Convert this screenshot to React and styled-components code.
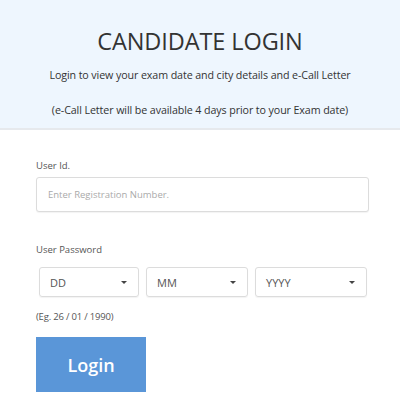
import React from "react";
import styled, { createGlobalStyle } from "styled-components";

const Global = createGlobalStyle`
  html, body { margin: 0; padding: 0; background: #fff; }
  body { font-family: "Open Sans", "Noto Sans", sans-serif; color: #333; }
  * { box-sizing: border-box; }
`;

const Page = styled.div`
  width: 400px;
  height: 404px;
  overflow: hidden;
`;

const Header = styled.header`
  background: #eef6fe;
  border-bottom: 2px solid #e6e9ed;
  padding: 26px 0 10px;
  text-align: center;
  height: 130px;
`;

const Title = styled.h1`
  margin: 0;
  font-size: 23.5px;
  line-height: 30px;
  font-weight: 400;
  color: #333;
  letter-spacing: -0.1px;
`;

const Sub = styled.p`
  margin: ${(p) => p.$mt}px 0 0;
  font-size: 10.7px;
  line-height: 16px;
  color: #333;
  letter-spacing: -0.1px;
`;

const Form = styled.form`
  padding: 29px 31px 0 36px;
  display: flex;
  flex-direction: column;
`;

const Label = styled.label`
  font-size: 9.5px;
  line-height: 14px;
  color: #555;
  margin-top: ${(p) => p.$mt || 0}px;
`;

const Input = styled.input`
  margin-top: 4px;
  width: 333px;
  height: 35px;
  border: 1px solid #dcdcdc;
  border-radius: 3px;
  box-shadow: 0 1px 1px rgba(0, 0, 0, 0.05);
  padding: 0 11px;
  font-family: "Open Sans", sans-serif;
  font-size: 9.5px;
  outline: none;
  &::placeholder { color: #aaa; }
`;

const SelectRow = styled.div`
  margin-top: 10px;
  margin-left: 3px;
  display: flex;
  gap: 7px;
`;

const Select = styled.div`
  width: ${(p) => p.$w}px;
  height: 30px;
  border: 1px solid #dcdcdc;
  border-radius: 3px;
  box-shadow: 0 1px 1px rgba(0, 0, 0, 0.05);
  display: flex;
  align-items: center;
  justify-content: space-between;
  padding: 0 11px 0 10px;
  font-size: 11px;
  color: #555;
`;

const Caret = styled.span`
  width: 0;
  height: 0;
  border-left: 3px solid transparent;
  border-right: 3px solid transparent;
  border-top: 3.5px solid #444;
`;

const Hint = styled.div`
  margin-top: 13px;
  font-size: 9.5px;
  line-height: 14px;
  color: #555;
  letter-spacing: -0.2px;
`;

const Button = styled.button`
  margin-top: 13px;
  width: 110px;
  height: 55px;
  background: #5a96d8;
  border: none;
  color: #fff;
  font-family: "Open Sans", sans-serif;
  font-size: 18px;
  font-weight: 600;
  padding: 0;
`;

export default function App() {
  return (
    <Page>
      <Global />
      <Header>
        <Title>CANDIDATE LOGIN</Title>
        <Sub $mt={11}>Login to view your exam date and city details and e-Call Letter</Sub>
        <Sub $mt={19}>(e-Call Letter will be available 4 days prior to your Exam date)</Sub>
      </Header>
      <Form onSubmit={(e) => e.preventDefault()}>
        <Label>User Id.</Label>
        <Input placeholder="Enter Registration Number." />
        <Label $mt={31}>User Password</Label>
        <SelectRow>
          <Select $w={100}>DD<Caret /></Select>
          <Select $w={102}>MM<Caret /></Select>
          <Select $w={112}>YYYY<Caret /></Select>
        </SelectRow>
        <Hint>(Eg. 26 / 01 / 1990)</Hint>
        <Button type="submit">Login</Button>
      </Form>
    </Page>
  );
}
